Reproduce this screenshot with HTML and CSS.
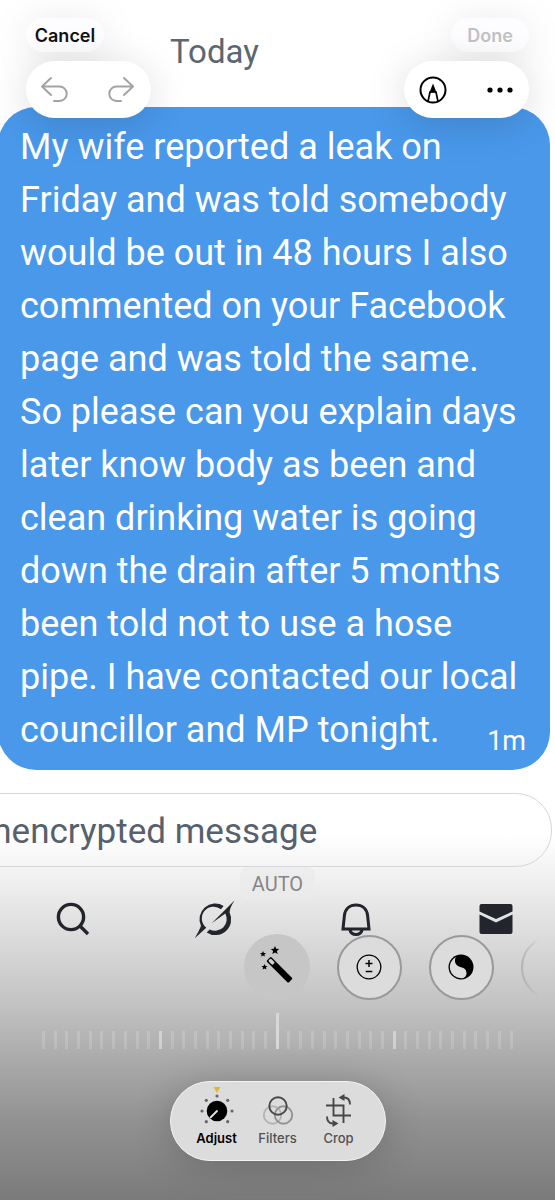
FILE: index.html
```html
<!DOCTYPE html>
<html lang="en">
<head>
<meta charset="utf-8">
<meta name="viewport" content="width=device-width, initial-scale=1">
<title>Edit photo</title>
<link rel="stylesheet" href="styles.css">
</head>
<body>
<div class="stage">
  <main class="photo">
    <h1 class="day">Today</h1>
    <article class="bubble">
      <p class="message">My wife reported a leak on<br>Friday and was told somebody<br>would be out in 48 hours I also<br>commented on your Facebook<br>page and was told the same.<br>So please can you explain days<br>later know body as been and<br>clean drinking water is going<br>down the drain after 5 months<br>been told not to use a hose<br>pipe. I have contacted our local<br>councillor and MP tonight.</p>
      <time class="age">1m</time>
    </article>
    <input class="composer" type="text" placeholder="unencrypted message" aria-label="Message">
    <nav class="tabs">
      <svg width="32" height="36" viewBox="0 0 32 36" fill="none" stroke="#23252c" stroke-width="3.4"><circle cx="15" cy="16" r="12.600"/><path d="M23.500 24.500 32 33"/></svg>
      <svg width="42" height="40" viewBox="0 0 42 40" fill="#23252c"><path d="M29.600 7A15.700 15.700 0 0 0 7 27Q5 32 .7 39.300L12.300 28.700A11.700 11.700 0 0 1 27 10.200Z"/><path d="M40.700 1.300 17.700 24.300 31.300 14.500A11.700 11.700 0 0 1 15.700 30.500L12.700 33.400A15.700 15.700 0 0 0 35.600 13.500Q35.500 9 40.700 1.300Z"/></svg>
      <svg width="32" height="36" viewBox="0 0 32 36" fill="none" stroke="#23252c" stroke-width="3"><path d="M2 28 3.400 14.500C4.200 7.500 9 4 15 4s10.800 3.500 11.600 10.500L28 28ZM8.700 28.500c1 3.600 3.400 5 6.300 5s5.300-1.400 6.300-5"/></svg>
      <svg width="34" height="32" viewBox="0 0 34 32" fill="#23252c"><path d="M2.500 1h29q2 0 2 2v5.500L17 16 .5 8.500V3q0-2 2-2ZM.5 11.500 17 19.500 33.500 11.500V29q0 2-2 2h-29q-2 0-2-2Z"/></svg>
    </nav>
  </main>

  <div class="editor">
    <header class="top">
      <div class="group">
        <button class="pill">Cancel</button>
        <div class="tools">
          <button class="tool" aria-label="Undo"><svg width="28" height="28" viewBox="0 0 28 28" fill="none" stroke="#a3a3a3" stroke-width="2" stroke-linecap="round" stroke-linejoin="round"><path d="M10 2 1 10.500 10 19M1 10.500h17.500a7 7 0 0 1 0 14.500H13"/></svg></button>
          <button class="tool" aria-label="Redo"><svg width="28" height="28" viewBox="0 0 28 28" fill="none" stroke="#a3a3a3" stroke-width="2" stroke-linecap="round" stroke-linejoin="round"><path d="M16 2l9 8.500L16 19M25 10.500H8.500a7 7 0 0 0 0 14.500H13"/></svg></button>
        </div>
      </div>
      <div class="group group-end">
        <button class="pill" disabled>Done</button>
        <div class="tools">
          <button class="tool" aria-label="Markup"><svg width="28" height="28" viewBox="0 0 28 28" fill="none" stroke="#000" stroke-width="2"><circle cx="14" cy="14" r="12.500"/><path d="M9 25.500 11 16h6l2 9.500" stroke-width="1.700"/><path d="M14 7.500 17.500 16.500h-7Z" fill="#000" stroke="none"/></svg></button>
          <button class="tool" aria-label="More"><svg width="28" height="28" viewBox="0 0 28 28"><circle cx="4" cy="14" r="2.600"/><circle cx="14" cy="14" r="2.600"/><circle cx="24" cy="14" r="2.600"/></svg></button>
        </div>
      </div>
    </header>

    <section class="controls">
      <p class="mode">AUTO</p>
      <div class="dials">
        <button class="dial dial-on" aria-label="Auto"><svg width="40" height="40" viewBox="0 0 40 40"><g transform="rotate(45 11 11)"><rect x="12" y="8" width="31" height="6.400" rx="1.200"/><rect x="13.200" y="9.400" width="6" height="3.600" rx="1.200" fill="#d0d0d0"/></g><path d="M18-1l1.200 2.800 3 .2-2.300 2 .8 3L18 5.400 15.300 7l.8-3-2.300-2 3-.2Z"/><path d="M6 4l.9 1.900 2.100.2-1.600 1.400.5 2L6 8.500 4.100 9.500l.5-2L3 6.100l2.100-.2ZM7.500 17l.9 1.900 2.100.2-1.600 1.400.5 2-1.900-1-1.900 1 .5-2-1.600-1.400 2.100-.2Z"/></svg></button>
        <button class="dial" aria-label="Exposure"><svg width="26" height="26" viewBox="0 0 26 26" fill="none" stroke="#000"><circle cx="13" cy="13" r="11.800" stroke-width="1.300"/><path d="M13 6v7M9.500 9.500h7M9.700 17.500h6.600" stroke-width="1.500"/></svg></button>
        <button class="dial" aria-label="Brilliance"><svg width="26" height="26" viewBox="0 0 26 26"><circle cx="13" cy="13" r="12.500"/><path d="M8 2.900A11.300 11.300 0 0 0 13 24.300c3.800 0 5.700-2.600 5.500-5.600-.3-4-3-4.900-5.500-5.500C7.500 11.800 5.500 7 8 2.900Z" fill="#dcdcdc"/></svg></button>
        <button class="dial dial-next" aria-label="Highlights"></button>
      </div>
      <div class="ruler">
        <div class="ticks"><i></i><i></i><i></i><i></i><i></i><i></i><i></i><i></i><i></i><i></i><i></i><i></i><i></i><i></i><i></i><i></i><i></i><i></i><i></i><i></i><i></i><i></i><i></i><i></i><i></i><i></i><i></i><i></i><i></i><i></i><i></i><i></i><i></i><i></i><i></i><i></i><i></i><i></i><i></i><i></i><i></i></div>
        <input class="amount" type="range" min="-100" max="100" value="0" aria-label="Amount">
      </div>
      <nav class="modes">
        <button class="modeitem modeitem-on"><svg width="36" height="40" viewBox="0 0 36 40"><path d="M14.500 1h7L18 7Z" fill="#dcb93a"/><g fill="#666"><circle cx="18" cy="10" r="1.600"/><circle cx="7.300" cy="14.300" r="1.600"/><circle cx="28.700" cy="14.300" r="1.600"/><circle cx="3" cy="25" r="1.600"/><circle cx="33" cy="25" r="1.600"/><circle cx="7.300" cy="35.700" r="1.600"/><circle cx="28.700" cy="35.700" r="1.600"/></g><circle cx="18" cy="25" r="10.300"/><path d="M18.500 24.500 11 32" stroke="#e4e4e4" stroke-width="1.800"/></svg>Adjust</button>
        <button class="modeitem"><svg width="36" height="40" viewBox="0 0 36 40" fill="none" stroke-width="1.900"><circle cx="12.500" cy="29" r="8.700" stroke="#b4b4b4"/><circle cx="23.500" cy="29" r="8.700" stroke="#929292"/><circle cx="18" cy="20" r="8.700" stroke="#474747"/></svg>Filters</button>
        <button class="modeitem"><svg width="36" height="40" viewBox="0 0 36 40" fill="none" stroke="#474747" stroke-width="1.900"><path d="M12.500 12v17.500H30M5 19.500h17.500V37M23 11.500q6 0 6 7M6 30.500q0 7 6 7"/><path d="M23.500 8v7l-6-3.500ZM11.500 34v7l6-3.500Z" fill="#474747" stroke="none"/></svg>Crop</button>
      </nav>
    </section>
  </div>
</div>
</body>
</html>
```
FILE: styles.css
```css
* { box-sizing: border-box; }
body {
  margin: 0;
  font-family: Roboto, "Liberation Sans", sans-serif;
  background: #fff;
}
h1, p { margin: 0; font-weight: 400; }
button { border: 0; padding: 0; font: inherit; color: inherit; background: none; }
svg { display: block; overflow: visible; }

.stage {
  display: grid;
  min-height: 100vh;
  overflow: hidden;
}
.photo, .editor { grid-area: 1 / 1; min-width: 0; }

.photo {
  display: flex;
  flex-direction: column;
  background: linear-gradient(to bottom, #fff 835px, #f3f3f3 870px, #dedede 930px, #c4c4c4 1000px, #aaa 1060px, #929292 1120px, #7a7a7a 1200px);
}
.day {
  height: 107px;
  padding: 32px 0 0 170px;
  font-size: 33px;
  line-height: 40px;
  color: #5b6670;
}
.bubble {
  display: flex;
  justify-content: space-between;
  align-items: flex-end;
  margin: 0 5px 0 -2px;
  padding: 14px 24px 13px 22px;
  border-radius: 38px;
  background: #4998ea;
  color: #fff;
}
.message {
  flex: 1;
  width: 0;
  font-size: 36px;
  line-height: 53px;
  white-space: nowrap;
}
.age {
  font-size: 27px;
  line-height: 32px;
}
.composer {
  height: 74px;
  margin: 23px 3px 0 -80px;
  padding: 2px 0 0 52px;
  border: 1px solid #d5d7dc;
  border-radius: 36px;
  background: transparent;
  font: 35px Roboto, "Liberation Sans", sans-serif;
}
.composer::placeholder { color: #57616b; opacity: 1; }
.tabs {
  display: flex;
  justify-content: space-between;
  align-items: center;
  height: 40px;
  margin: 32px 42px 0 56px;
}

.editor {
  display: flex;
  flex-direction: column;
  justify-content: space-between;
  z-index: 1;
}
.top {
  display: flex;
  justify-content: space-between;
  padding: 18px 26px 0;
}
.group {
  display: flex;
  flex-direction: column;
  align-items: flex-start;
  gap: 9px;
}
.group-end { align-items: flex-end; }
.pill {
  width: 78px;
  height: 34px;
  border-radius: 17px;
  background: #fdfdff;
  box-shadow: 0 4px 40px rgba(0, 0, 0, .1);
  font: 600 18px Inter, "Liberation Sans", sans-serif;
  color: #111;
}
.pill:disabled { color: #c2c2c4; }
.tools {
  display: flex;
  justify-content: space-between;
  width: 125px;
  height: 57px;
  padding: 0 15px;
  border-radius: 29px;
  background: #fff;
  box-shadow: 0 6px 40px rgba(0, 0, 0, .15);
}

.controls {
  display: flex;
  flex-direction: column;
  align-items: center;
  padding-bottom: 39px;
}
.mode {
  width: 75px;
  height: 32px;
  border-radius: 8px;
  background: rgba(235, 235, 235, .8);
  font-size: 20px;
  line-height: 34px;
  text-align: center;
  color: #858585;
}
.dials {
  display: flex;
  align-items: center;
  gap: 27px;
  width: calc(100% - 17px);
  margin-top: 35px;
  padding-left: calc(50% - 34px);
  align-self: flex-start;
  overflow: hidden;
  mask-image: linear-gradient(to right, #000 calc(100% - 30px), transparent);
}
.dial {
  display: flex;
  flex: none;
  align-items: center;
  justify-content: center;
  width: 65px;
  height: 65px;
  border: 2px solid #999;
  border-radius: 50%;
  background: #dcdcdc;
}
.dial-on { width: 66px; height: 66px; border: 0; background: #c6c6c6; }
.dial-next { background: transparent; }
.ruler {
  display: grid;
  align-items: end;
  align-self: stretch;
  height: 36px;
  margin: 13px 42px 0;
}
.ticks, .amount { grid-area: 1 / 1; }
.ticks { display: flex; justify-content: space-between; }
.ticks i { width: 3px; height: 18px; background: rgba(255, 255, 255, .16); }
.ticks i:nth-child(20n + 11) { background: rgba(255, 255, 255, .4); }
.amount {
  appearance: none;
  width: 100%;
  height: 36px;
  margin: 0;
  background: transparent;
}
.amount::-webkit-slider-thumb {
  appearance: none;
  width: 3px;
  height: 36px;
  background: #d8d8d8;
}
.modes {
  display: flex;
  justify-content: center;
  gap: 1px;
  width: 216px;
  height: 80px;
  margin-top: 32px;
  border: 1px solid #f5f5f5;
  border-radius: 40px;
  background: #dcdcdc;
  box-shadow: 0 4px 40px rgba(0, 0, 0, .2);
}
.modeitem {
  display: flex;
  flex-direction: column;
  align-items: center;
  gap: 2px;
  width: 60px;
  padding-top: 4px;
  font: 500 13px/20px Inter, "Liberation Sans", sans-serif;
  color: #505050;
}
.modeitem-on { font-weight: 600; color: #000; }
```
